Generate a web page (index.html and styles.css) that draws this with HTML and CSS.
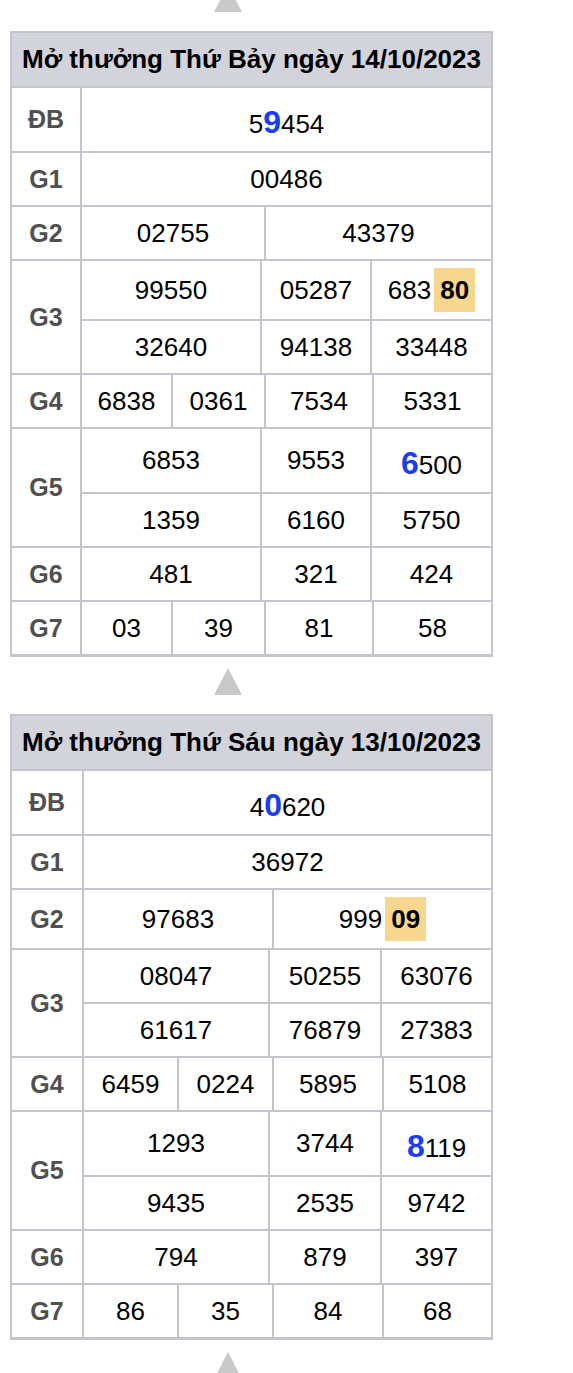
FILE: index.html
```html
<!DOCTYPE html>
<html lang="vi">
<head>
<meta charset="utf-8">
<title>Kết quả xổ số</title>
<link rel="stylesheet" href="styles.css">
</head>
<body>
<div class="arrow first"></div>
<div class="kq t1">
  <div class="head">Mở thưởng Thứ Bảy ngày 14/10/2023</div>
  <div class="prize"><div class="lbl">ĐB</div><div class="body">
    <div class="sub c1 db"><div class="cell">5<b class="blue">9</b>454</div></div>
  </div></div>
  <div class="prize"><div class="lbl">G1</div><div class="body">
    <div class="sub c1"><div class="cell">00486</div></div>
  </div></div>
  <div class="prize"><div class="lbl">G2</div><div class="body">
    <div class="sub c2"><div class="cell">02755</div><div class="cell">43379</div></div>
  </div></div>
  <div class="prize"><div class="lbl">G3</div><div class="body">
    <div class="sub c3 hl"><div class="cell">99550</div><div class="cell">05287</div><div class="cell">683<b class="mark">80</b></div></div>
    <div class="sub c3"><div class="cell">32640</div><div class="cell">94138</div><div class="cell">33448</div></div>
  </div></div>
  <div class="prize"><div class="lbl">G4</div><div class="body">
    <div class="sub c4"><div class="cell">6838</div><div class="cell">0361</div><div class="cell">7534</div><div class="cell">5331</div></div>
  </div></div>
  <div class="prize"><div class="lbl">G5</div><div class="body">
    <div class="sub c3 big"><div class="cell">6853</div><div class="cell">9553</div><div class="cell"><b class="blue">6</b>500</div></div>
    <div class="sub c3"><div class="cell">1359</div><div class="cell">6160</div><div class="cell">5750</div></div>
  </div></div>
  <div class="prize"><div class="lbl">G6</div><div class="body">
    <div class="sub c3"><div class="cell">481</div><div class="cell">321</div><div class="cell">424</div></div>
  </div></div>
  <div class="prize"><div class="lbl">G7</div><div class="body">
    <div class="sub c4"><div class="cell">03</div><div class="cell">39</div><div class="cell">81</div><div class="cell">58</div></div>
  </div></div>
</div>

<div class="arrow"></div>
<div class="kq t2">
  <div class="head">Mở thưởng Thứ Sáu ngày 13/10/2023</div>
  <div class="prize"><div class="lbl">ĐB</div><div class="body">
    <div class="sub c1 db"><div class="cell">4<b class="blue">0</b>620</div></div>
  </div></div>
  <div class="prize"><div class="lbl">G1</div><div class="body">
    <div class="sub c1"><div class="cell">36972</div></div>
  </div></div>
  <div class="prize"><div class="lbl">G2</div><div class="body">
    <div class="sub c2 hl"><div class="cell">97683</div><div class="cell">999<b class="mark">09</b></div></div>
  </div></div>
  <div class="prize"><div class="lbl">G3</div><div class="body">
    <div class="sub c3"><div class="cell">08047</div><div class="cell">50255</div><div class="cell">63076</div></div>
    <div class="sub c3"><div class="cell">61617</div><div class="cell">76879</div><div class="cell">27383</div></div>
  </div></div>
  <div class="prize"><div class="lbl">G4</div><div class="body">
    <div class="sub c4"><div class="cell">6459</div><div class="cell">0224</div><div class="cell">5895</div><div class="cell">5108</div></div>
  </div></div>
  <div class="prize"><div class="lbl">G5</div><div class="body">
    <div class="sub c3 big"><div class="cell">1293</div><div class="cell">3744</div><div class="cell"><b class="blue">8</b>119</div></div>
    <div class="sub c3"><div class="cell">9435</div><div class="cell">2535</div><div class="cell">9742</div></div>
  </div></div>
  <div class="prize"><div class="lbl">G6</div><div class="body">
    <div class="sub c3"><div class="cell">794</div><div class="cell">879</div><div class="cell">397</div></div>
  </div></div>
  <div class="prize"><div class="lbl">G7</div><div class="body">
    <div class="sub c4"><div class="cell">86</div><div class="cell">35</div><div class="cell">84</div><div class="cell">68</div></div>
  </div></div>
</div>
<div class="arrow last"></div>
</body>
</html>
```
FILE: styles.css
```css
html, body {
  margin: 0;
  padding: 0;
  background: #ffffff;
}
body {
  font-family: "Liberation Sans", Arial, Helvetica, sans-serif;
  color: #000;
  overflow: hidden;
}
.arrow {
  width: 0;
  height: 0;
  margin-left: 214px;
  margin-top: 11px;
  border-left: 14px solid transparent;
  border-right: 14px solid transparent;
  border-bottom: 27px solid #c9c9c9;
}
.arrow.first {
  margin-top: -15px;
}
.arrow.last {
  margin-top: 12px;
}
.kq {
  box-sizing: border-box;
  width: 483px;
  margin: 19px 0 0 10px;
  border: 2px solid #c3c4cd;
  border-bottom-width: 3px;
}
.t1 {
  --lbl: 68px;
  --g2: 182px 1fr;
  --g3: 178px 110px 1fr;
  --g4: 89px 93px 108px 1fr;
}
.t2 {
  --lbl: 70px;
  --g2: 188px 1fr;
  --g3: 184px 112px 1fr;
  --g4: 93px 95px 110px 1fr;
}
.head {
  height: 53px;
  display: flex;
  align-items: center;
  padding-left: 10px;
  background: #d2d3db;
  border-bottom: 2px solid #c3c4cd;
  font-size: 26px;
  font-weight: bold;
  color: #000;
  white-space: nowrap;
}
.prize {
  display: flex;
}
.prize + .prize {
  border-top: 2px solid #c3c4cd;
}
.lbl {
  box-sizing: content-box;
  width: var(--lbl);
  flex: none;
  display: flex;
  align-items: center;
  justify-content: center;
  border-right: 2px solid #c3c4cd;
  font-size: 25px;
  font-weight: bold;
  color: #505050;
}
.body {
  flex: 1;
  min-width: 0;
}
.sub {
  display: grid;
  height: 52px;
}
.sub + .sub {
  border-top: 2px solid #c3c4cd;
}
.sub.c1 { grid-template-columns: 1fr; }
.sub.c2 { grid-template-columns: var(--g2); }
.sub.c3 { grid-template-columns: var(--g3); }
.sub.c4 { grid-template-columns: var(--g4); }
.sub.db { height: 63px; }
.sub.big { height: 63px; }
.sub.hl { height: 58px; }
.cell {
  box-sizing: border-box;
  display: flex;
  align-items: center;
  justify-content: center;
  font-size: 26px;
  white-space: nowrap;
}
.cell + .cell {
  border-left: 2px solid #c3c4cd;
}
.blue {
  font-size: 32px;
  font-weight: bold;
  color: #1a3cf4;
  line-height: 1;
}
.cell:has(.blue) {
  align-items: baseline;
  padding-top: 18px;
}
.mark {
  margin-left: 3px;
  padding: 7px 6px;
  line-height: 30px;
  background: #f7d78d;
  font-weight: bold;
}
```
